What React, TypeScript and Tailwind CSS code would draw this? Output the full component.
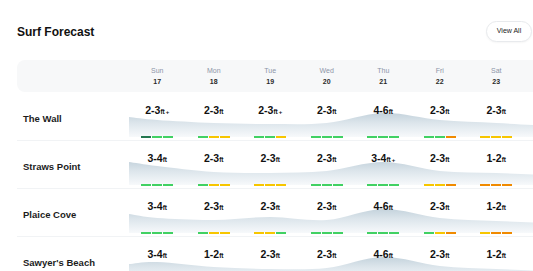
import React from "react"

const days = [
  ["Sun", "17"],
  ["Mon", "18"],
  ["Tue", "19"],
  ["Wed", "20"],
  ["Thu", "21"],
  ["Fri", "22"],
  ["Sat", "23"],
]

const barColor: Record<string, string> = {
  d: "bg-[#23774f]",
  g: "bg-[#41d163]",
  y: "bg-[#f7c600]",
  o: "bg-[#f08a00]",
}

interface Spot {
  name: string
  sizes: string[]
  bars: string[]
  wave: number[]
}

const spots: Spot[] = [
  {
    name: "The Wall",
    sizes: ["2-3+", "2-3", "2-3+", "2-3", "4-6", "2-3", "2-3"],
    bars: ["dgg", "gyy", "ggy", "ggg", "ggg", "ggo", "yyy"],
    wave: [5, 8, 11, 12, 11, 1, 8, 11, 14],
  },
  {
    name: "Straws Point",
    sizes: ["3-4", "2-3", "2-3", "2-3", "3-4+", "2-3", "1-2"],
    bars: ["ggg", "gyy", "yyy", "ggg", "ggg", "yyo", "ooo"],
    wave: [2, 6, 12, 13, 11, 2, 11, 13, 15],
  },
  {
    name: "Plaice Cove",
    sizes: ["3-4", "2-3", "2-3", "2-3", "4-6", "2-3", "1-2"],
    bars: ["ggg", "gyy", "yyg", "ggg", "ggg", "gyo", "yoo"],
    wave: [6, 10, 12, 9, 12, 1, 10, 13, 15],
  },
  {
    name: "Sawyer's Beach",
    sizes: ["3-4", "1-2", "2-3", "2-3", "4-6", "2-3", "1-2"],
    bars: ["ggg", "yyy", "gyy", "ggg", "ggg", "gyo", "ooo"],
    wave: [8, 6, 11, 13, 12, 1, 10, 13, 15],
  },
]

const COL = 56.5
const WAVE_W = 420
const WAVE_H = 25

// smooth curve through the day points (catmull-rom -> bezier)
function wavePath(values: number[]) {
  const xs = [0, ...days.map((_, i) => COL * i + COL / 2), WAVE_W]
  const pts = xs.map((x, i) => [x, values[i]])
  let d = `M0,${WAVE_H} L${pts[0][0]},${pts[0][1]}`
  for (let i = 0; i < pts.length - 1; i++) {
    const p0 = pts[Math.max(i - 1, 0)]
    const p1 = pts[i]
    const p2 = pts[i + 1]
    const p3 = pts[Math.min(i + 2, pts.length - 1)]
    const c1x = p1[0] + (p2[0] - p0[0]) / 6
    const c1y = p1[1] + (p2[1] - p0[1]) / 6
    const c2x = p2[0] - (p3[0] - p1[0]) / 6
    const c2y = p2[1] - (p3[1] - p1[1]) / 6
    d += ` C${c1x},${c1y} ${c2x},${c2y} ${p2[0]},${p2[1]}`
  }
  return d + ` L${WAVE_W},${WAVE_H} Z`
}

function Wave({ values, id }: { values: number[]; id: string }) {
  return (
    <svg
      width={WAVE_W}
      height={WAVE_H}
      viewBox={`0 0 ${WAVE_W} ${WAVE_H}`}
      className="absolute left-0 top-[19px]"
    >
      <defs>
        <linearGradient id={id} x1="0" y1="0" x2="0" y2={WAVE_H} gradientUnits="userSpaceOnUse">
          <stop offset="0" stopColor="#c2d1db" />
          <stop offset="0.45" stopColor="#dde6ec" />
          <stop offset="1" stopColor="#f7f9fb" />
        </linearGradient>
      </defs>
      <path d={wavePath(values)} fill={`url(#${id})`} />
    </svg>
  )
}

function Size({ value }: { value: string }) {
  const plus = value.endsWith("+")
  const range = value.replace("+", "")
  return (
    <div className="flex items-baseline font-bold text-[#111]">
      <span className="text-[10.5px] leading-none">{range}</span>
      <span className="text-[6.5px] leading-none">ft</span>
      {plus && <span className="ml-[1px] text-[6px] leading-none">+</span>}
    </div>
  )
}

function SpotRow({ spot, index }: { spot: Spot; index: number }) {
  return (
    <div className="flex h-[48px] border-b border-[#f1f3f5]">
      <div className="flex w-[112px] shrink-0 items-center pl-[6px] pt-[5px] text-[9.5px] font-bold text-[#1c1c1c]">
        {spot.name}
      </div>
      <div className="relative flex flex-1">
        <Wave values={spot.wave} id={`wave-${index}`} />
        {spot.sizes.map((s, i) => (
          <div key={i} className="relative flex w-[56.5px] shrink-0 flex-col items-center pt-[12px]">
            <Size value={s} />
            <div className="mt-[20px] flex gap-[1px]">
              {spot.bars[i].split("").map((c, j) => (
                <div key={j} className={`h-[2px] w-[10px] ${barColor[c]}`} />
              ))}
            </div>
          </div>
        ))}
      </div>
    </div>
  )
}

export default function App() {
  return (
    <div className="h-[271px] w-[533px] overflow-hidden bg-white font-['Liberation_Sans',Arial,sans-serif]">
      <div className="pl-[17px]">
        <div className="flex w-[515px] items-center justify-between pt-[21px]">
          <h2 className="text-[12px] font-bold text-[#111]">Surf Forecast</h2>
          <button className="h-[21px] w-[46px] rounded-full border border-[#e8eaed] bg-white text-[7px] font-medium text-[#222] shadow-[0_1px_2px_rgba(0,0,0,0.04)]">
            View All
          </button>
        </div>
        <div className="mt-[18px] w-[540px]">
          <div className="flex h-[32px] rounded-lg bg-[#f7f8f9]">
            <div className="w-[112px] shrink-0" />
            {days.map(([d, n]) => (
              <div key={d} className="flex w-[56.5px] shrink-0 flex-col items-center justify-center gap-[2px]">
                <span className="text-[7px] leading-[9px] text-[#8d95a8]">{d}</span>
                <span className="text-[7px] leading-[9px] font-bold text-[#2a2a2a]">{n}</span>
              </div>
            ))}
          </div>
          <div className="mt-[1px]">
            {spots.map((s, i) => (
              <SpotRow key={s.name} spot={s} index={i} />
            ))}
          </div>
        </div>
      </div>
    </div>
  )
}
